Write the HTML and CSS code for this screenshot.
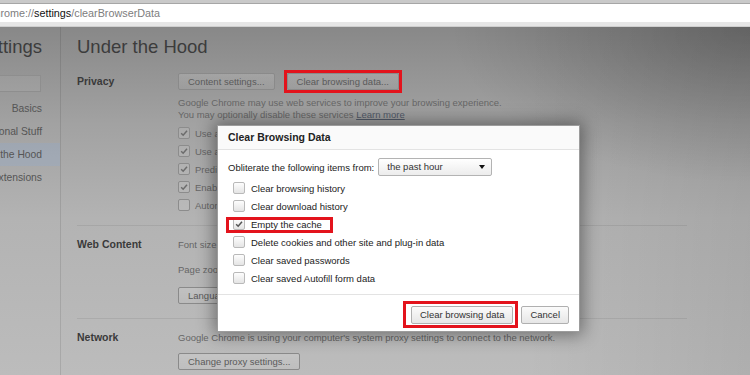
FILE: index.html
```html
<!DOCTYPE html>
<html>
<head>
    <meta charset="utf-8">
    <title>Settings - Under the Hood</title>
    <link rel="stylesheet" href="styles.css">
</head>
<body>
    <div class="toolbar">
        <div class="toolbar-top"></div>
        <div class="omnibox">
            <span class="url"><span class="url-scheme">chrome://</span><span class="url-host">settings</span><span class="url-path">/clearBrowserData</span></span>
        </div>
        <div class="toolbar-bottom"></div>
    </div>

    <div class="page">
        <div class="sidebar">
            <h1 class="sidebar-title">Settings</h1>
            <div class="search"></div>
            <ul class="nav">
                <li>Basics</li>
                <li>Personal Stuff</li>
                <li class="selected">Under the Hood</li>
                <li>Extensions</li>
            </ul>
        </div>

        <div class="main">
            <h2 class="page-title">Under the Hood</h2>

            <div class="section privacy">
                <div class="section-label">Privacy</div>
                <div class="section-body">
                    <div class="button-row">
                        <span class="btn">Content settings...</span>
                        <span class="btn marked">Clear browsing data...</span>
                    </div>
                    <p class="hint">Google Chrome may use web services to improve your browsing experience.<br>You may optionally disable these services <span class="link">Learn more</span></p>
                    <div class="check"><span class="box"><svg class="tick" viewBox="0 0 12 12"><path d="M2.6 6.2 L5 8.6 L9.6 3.2"/></svg></span>Use a web service to help resolve navigation errors</div>
                    <div class="check"><span class="box"><svg class="tick" viewBox="0 0 12 12"><path d="M2.6 6.2 L5 8.6 L9.6 3.2"/></svg></span>Use a prediction service to help complete searches and URLs</div>
                    <div class="check"><span class="box"><svg class="tick" viewBox="0 0 12 12"><path d="M2.6 6.2 L5 8.6 L9.6 3.2"/></svg></span>Predict network actions to improve page load performance</div>
                    <div class="check"><span class="box"><svg class="tick" viewBox="0 0 12 12"><path d="M2.6 6.2 L5 8.6 L9.6 3.2"/></svg></span>Enable phishing and malware protection</div>
                    <div class="check"><span class="box"></span>Automatically send usage statistics and crash reports to Google</div>
                </div>
            </div>

            <div class="section web-content">
                <div class="section-label">Web Content</div>
                <div class="section-body">
                    <div class="setting-row">Font size: <span class="mini-select">Medium</span> <span class="btn">Customize fonts...</span></div>
                    <div class="setting-row">Page zoom: <span class="mini-select">100%</span></div>
                    <span class="btn">Languages and spell-checker settings...</span>
                </div>
            </div>

            <div class="section network">
                <div class="section-label">Network</div>
                <div class="section-body">
                    <div class="setting-row">Google Chrome is using your computer's system proxy settings to connect to the network.</div>
                    <span class="btn">Change proxy settings...</span>
                </div>
            </div>
        </div>
    </div>

    <div class="dialog">
        <div class="dialog-header">Clear Browsing Data</div>
        <div class="dialog-body">
            <div class="period-row">
                Obliterate the following items from:
                <span class="select">the past hour<span class="arrow"></span></span>
            </div>
            <div class="dlg-check"><span class="box"></span>Clear browsing history</div>
            <div class="dlg-check"><span class="box"></span>Clear download history</div>
            <div class="dlg-check marked-row"><span class="box"><svg class="tick" viewBox="0 0 12 12"><path d="M2.6 6.2 L5 8.6 L9.6 3.2"/></svg></span>Empty the cache</div>
            <div class="dlg-check"><span class="box"></span>Delete cookies and other site and plug-in data</div>
            <div class="dlg-check"><span class="box"></span>Clear saved passwords</div>
            <div class="dlg-check"><span class="box"></span>Clear saved Autofill form data</div>
        </div>
        <div class="dialog-footer">
            <span class="dlg-btn marked-footer">Clear browsing data</span>
            <span class="dlg-btn">Cancel</span>
        </div>
    </div>
</body>
</html>
```

FILE: styles.css
```css
body {
    margin: 0;
    height: 375px;
    overflow: hidden;
    font-family: "Liberation Sans", Arial, sans-serif;
    font-size: 9.5px;
    background-color: #bcbcbc;
}

/* browser toolbar */

.toolbar-top {
    height: 3px;
    background-color: #c9c9c9;
    border-bottom: 1px solid #a6a6a6;
}

.omnibox {
    height: 18px;
    line-height: 18px;
    background-color: #fff;
    font-size: 10.8px;
    color: #7d7d7d;
    white-space: nowrap;
}

.url {
    display: inline-block;
    margin-left: -11px;
}

.url-host {
    color: #111;
}

.toolbar-bottom {
    height: 4px;
    background-color: #e6e6e6;
    border-bottom: 1px solid #cfcfcf;
}

/* dimmed settings page */

.page {
    display: flex;
    height: 348px;
    background:
        radial-gradient(ellipse 40% 45% at 100% 0, rgba(0, 0, 0, .22), rgba(0, 0, 0, 0)),
        linear-gradient(to right, rgba(0, 0, 0, 0) 70%, rgba(0, 0, 0, .07)),
        linear-gradient(to bottom, #888 0, #a2a2a2 28%, #b3b3b3 55%, #bcbcbc 100%);
}

.sidebar {
    flex: 0 0 200px;
    margin-left: -140px;
    padding-top: 9px;
    border-right: 1px solid rgba(0, 0, 0, .1);
}

.sidebar-title {
    margin: 0;
    padding-right: 18px;
    font-size: 18.5px;
    font-weight: normal;
    line-height: 22px;
    text-align: right;
    color: #3c3c3c;
}

.search {
    box-sizing: border-box;
    width: 110px;
    height: 17px;
    margin: 17px 19px 0 auto;
    border: 1px solid #8e8e8e;
    background-color: rgba(255, 255, 255, .06);
}

.nav {
    list-style: none;
    margin: 5px 0 0;
    padding: 0;
}

.nav li {
    height: 23px;
    line-height: 23px;
    padding-right: 18px;
    text-align: right;
    font-size: 10.3px;
    color: #555;
    white-space: nowrap;
}

.nav li.selected {
    background-color: rgba(140, 170, 215, .25);
}

.main {
    flex: 1;
    padding: 9px 0 0 16px;
    color: #666;
    white-space: nowrap;
}

.page-title {
    margin: 0;
    font-size: 18.5px;
    font-weight: normal;
    line-height: 22px;
    color: #3c3c3c;
}

.section {
    display: flex;
    width: 610px;
}

.section + .section {
    border-top: 1px solid rgba(0, 0, 0, .07);
}

.section-label {
    flex: 0 0 101px;
    font-size: 10.5px;
    font-weight: bold;
    line-height: 25px;
    color: #3a3a3a;
}

.section-body {
    flex: 1;
}

.privacy {
    margin-top: 11px;
    padding-bottom: 11px;
}

.web-content {
    padding: 6px 0 14px;
}

.network {
    padding-top: 6px;
}

.button-row {
    display: flex;
    align-items: center;
    height: 25px;
}

.btn {
    display: inline-block;
    box-sizing: border-box;
    height: 17px;
    padding: 0 9px;
    line-height: 15px;
    border: 1px solid #8a8a8a;
    border-radius: 2px;
    background: linear-gradient(rgba(255, 255, 255, .14), rgba(255, 255, 255, .04));
    color: #5a5a5a;
    vertical-align: middle;
}

.btn.marked {
    position: relative;
    margin-left: 12px;
}

.btn.marked:after {
    content: '';
    position: absolute;
    top: -4px;
    bottom: -4px;
    left: -4px;
    right: -4px;
    border: 3px solid #e3131c;
}

.hint {
    margin: 3px 0 3px;
    line-height: 12px;
}

.link {
    color: #525a68;
    text-decoration: underline;
}

.check {
    display: flex;
    align-items: center;
    height: 18px;
}

.check .box {
    border-color: #8c8c8c;
    background: rgba(255, 255, 255, .1);
    color: #6c6c6c;
    margin-right: 5px;
}

.setting-row {
    height: 25px;
    line-height: 25px;
}

.mini-select {
    display: inline-block;
    padding: 0 20px 0 6px;
    border: 1px solid #8a8a8a;
    line-height: 15px;
}

.web-content .btn:last-child {
    margin-top: 5px;
}

.network .btn {
    margin-top: 3px;
}

/* checkbox shared */

.box {
    flex: 0 0 auto;
    box-sizing: border-box;
    width: 12px;
    height: 12px;
    border: 1px solid #b9b9b9;
    border-radius: 2px;
    background: linear-gradient(#fdfdfd, #e4e4e4);
    color: #555;
}

.tick {
    display: block;
    width: 10px;
    height: 10px;
    fill: none;
    stroke: currentColor;
    stroke-width: 1.8;
}

/* dialog */

.dialog {
    position: absolute;
    left: 217px;
    top: 125px;
    width: 361px;
    height: 205px;
    border: 1px solid #9c9c9c;
    background-color: #fff;
    box-shadow: 0 0 16px 3px rgba(0, 0, 0, .4);
    color: #222;
    white-space: nowrap;
}

.dialog-header {
    height: 23px;
    line-height: 23px;
    padding-left: 10px;
    border-bottom: 1px solid #e3e3e3;
    background-color: #fafafa;
    font-size: 10.5px;
    font-weight: bold;
}

.dialog-body {
    padding: 8px 0 7px 10px;
}

.period-row {
    display: flex;
    align-items: center;
    height: 18px;
    margin-bottom: 3px;
}

.select {
    position: relative;
    box-sizing: border-box;
    width: 114px;
    height: 18px;
    margin-left: 4px;
    padding-left: 8px;
    line-height: 16px;
    border: 1px solid #b3b3b3;
    border-radius: 2px;
    background: linear-gradient(#fff, #ececec);
    color: #333;
}

.arrow {
    position: absolute;
    right: 6px;
    top: 6px;
    border-left: 3.5px solid transparent;
    border-right: 3.5px solid transparent;
    border-top: 4px solid #111;
}

.dlg-check {
    display: flex;
    align-items: center;
    width: max-content;
    height: 18px;
    margin-left: 5px;
}

.dlg-check .box {
    margin-right: 6px;
}

.marked-row {
    position: relative;
}

.marked-row:after {
    content: '';
    position: absolute;
    top: 2px;
    bottom: 0;
    left: -7px;
    right: -11px;
    border: 3px solid #e3131c;
}

.dialog-footer {
    display: flex;
    justify-content: flex-end;
    align-items: flex-start;
    gap: 8px;
    height: 18px;
    padding: 11px 10px 7px;
    border-top: 1px solid #e3e3e3;
}

.dlg-btn {
    box-sizing: border-box;
    height: 18px;
    padding: 0 8px;
    line-height: 16px;
    border: 1px solid #b0b0b0;
    border-radius: 2px;
    background: linear-gradient(#fbfbfb, #e6e6e6);
    color: #333;
}

.marked-footer {
    position: relative;
}

.marked-footer:after {
    content: '';
    position: absolute;
    top: -6px;
    bottom: -5px;
    left: -9px;
    right: -6px;
    border: 3px solid #e3131c;
}
```
